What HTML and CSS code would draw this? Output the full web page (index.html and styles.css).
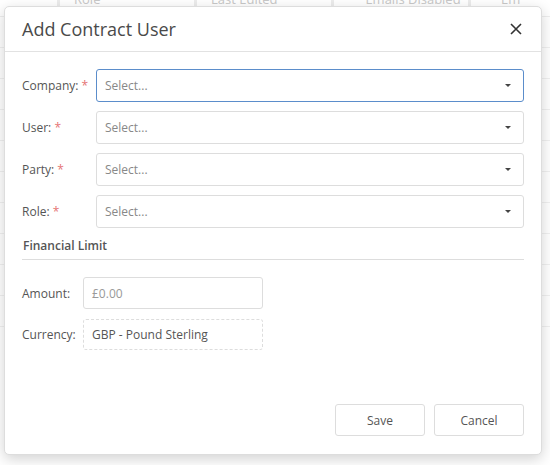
FILE: index.html
```html
<html>

<head>
  <meta name="viewport" content="width=device-width, initial-scale=1.0">
  <link rel="stylesheet" href="styles.css">
</head>

<body>
  <div class="page">
    <div class="grid-head">
      <div class="gh-first"></div>
      <i class="handle"></i>
      <div class="gh-cell">Role</div>
      <i class="handle"></i>
      <div class="gh-cell">Last Edited</div>
      <i class="handle"></i>
      <div class="gh-cell center">Emails Disabled</div>
      <i class="handle"></i>
      <div class="gh-cell last">Em</div>
    </div>
    <div class="grid-row"></div>
    <div class="grid-row"></div>
    <div class="grid-row"></div>
    <div class="grid-row"></div>
    <div class="grid-row"></div>
    <div class="grid-row"></div>
    <div class="grid-row"></div>
    <div class="grid-row"></div>
    <div class="grid-row"></div>
    <div class="grid-row"></div>
  </div>

  <div class="modal">
    <div class="modal-head">
      <span class="modal-title">Add Contract User</span>
      <svg class="close" width="14" height="14" viewBox="0 0 14 14">
        <path d="M2 2 L12 12 M12 2 L2 12" stroke="#333" stroke-width="1.6" fill="none" />
      </svg>
    </div>
    <div class="modal-body">
      <div class="field">
        <label class="lbl">Company: <span class="req">*</span></label>
        <div class="select focused"><span>Select...</span><i class="caret"></i></div>
      </div>
      <div class="field">
        <label class="lbl">User: <span class="req">*</span></label>
        <div class="select"><span>Select...</span><i class="caret"></i></div>
      </div>
      <div class="field">
        <label class="lbl">Party: <span class="req">*</span></label>
        <div class="select"><span>Select...</span><i class="caret"></i></div>
      </div>
      <div class="field">
        <label class="lbl">Role: <span class="req">*</span></label>
        <div class="select"><span>Select...</span><i class="caret"></i></div>
      </div>

      <div class="section">Financial Limit</div>

      <div class="field small">
        <label class="lbl short">Amount:</label>
        <div class="input">£0.00</div>
      </div>
      <div class="field small">
        <label class="lbl short">Currency:</label>
        <div class="input readonly">GBP - Pound Sterling</div>
      </div>
    </div>
    <div class="modal-foot">
      <button class="btn">Save</button>
      <button class="btn">Cancel</button>
    </div>
  </div>
</body>

</html>
```

FILE: styles.css
```css
body {
  margin: 0;
  font-family: "Open Sans", "Liberation Sans", sans-serif;
  background: #fff;
  overflow: hidden;
}

.page {
  margin-top: -8px;
}

.grid-head {
  display: flex;
  align-items: center;
  height: 24px;
  border-bottom: 1px solid #eee;
  overflow: hidden;
}

.gh-first {
  width: 57px;
  flex: none;
}

.handle {
  width: 3px;
  height: 12px;
  margin-right: 8px;
  background: #ececec;
  flex: none;
}

.gh-cell {
  width: 120px;
  flex: none;
  color: #c8c8c8;
  font-size: 13px;
  line-height: 16px;
  padding-left: 6px;
  margin-top: -10px;
  white-space: nowrap;
}

.gh-cell.center {
  text-align: center;
  padding-left: 16px;
  width: 110px;
}

.gh-cell.last {
  width: auto;
  flex: 1;
  padding-left: 22px;
  overflow: hidden;
}

.grid-row {
  height: 30px;
  border-bottom: 1px solid #f0f0f0;
}

.modal {
  position: absolute;
  left: 4px;
  top: 6px;
  width: 538px;
  height: 449px;
  background: #fff;
  border: 1px solid #ddd;
  box-sizing: border-box;
  border-radius: 5px;
  box-shadow: 0 4px 14px rgba(0, 0, 0, 0.18);
  display: flex;
  flex-direction: column;
}

.modal-head {
  height: 44px;
  border-bottom: 1px solid #e2e2e2;
  display: flex;
  align-items: center;
  justify-content: space-between;
  padding: 0 18px 0 17px;
}

.modal-title {
  font-size: 18px;
  color: #4a4a4a;
}

.modal-body {
  padding: 17px 17px 0 17px;
  flex: 1;
}

.field {
  display: flex;
  align-items: center;
  margin-bottom: 9px;
}

.lbl {
  width: 74px;
  flex: none;
  font-size: 12px;
  color: #555;
}

.lbl.short {
  width: 61px;
}

.req {
  color: #e57373;
}

.select {
  flex: 1;
  height: 33px;
  box-sizing: border-box;
  border: 1px solid #ddd;
  border-radius: 3px;
  display: flex;
  align-items: center;
  justify-content: space-between;
  padding: 0 12px 0 8px;
  font-size: 12px;
  color: #888;
}

.select.focused {
  border-color: #5b8dcb;
}

.caret {
  width: 0;
  height: 0;
  border-left: 3.5px solid transparent;
  border-right: 3.5px solid transparent;
  border-top: 3.5px solid #444;
}

.section {
  font-size: 12px;
  font-weight: 600;
  color: #555;
  padding: 0 0 5px 1px;
  border-bottom: 1px solid #ddd;
  margin-bottom: 17px;
}

.field.small {
  margin-bottom: 10px;
}

.input {
  width: 180px;
  height: 32px;
  box-sizing: border-box;
  border: 1px solid #ddd;
  border-radius: 3px;
  font-size: 12px;
  color: #999;
  padding: 0 8px;
  display: flex;
  align-items: center;
}

.input.readonly {
  border-style: dashed;
  color: #555;
  height: 31px;
}

.modal-foot {
  display: flex;
  justify-content: flex-end;
  gap: 9px;
  padding: 0 17px 18px 0;
}

.btn {
  width: 90px;
  height: 32px;
  background: #fff;
  border: 1px solid #ddd;
  border-radius: 3px;
  font-family: "Open Sans", "Liberation Sans", sans-serif;
  font-size: 12px;
  color: #555;
}
```
